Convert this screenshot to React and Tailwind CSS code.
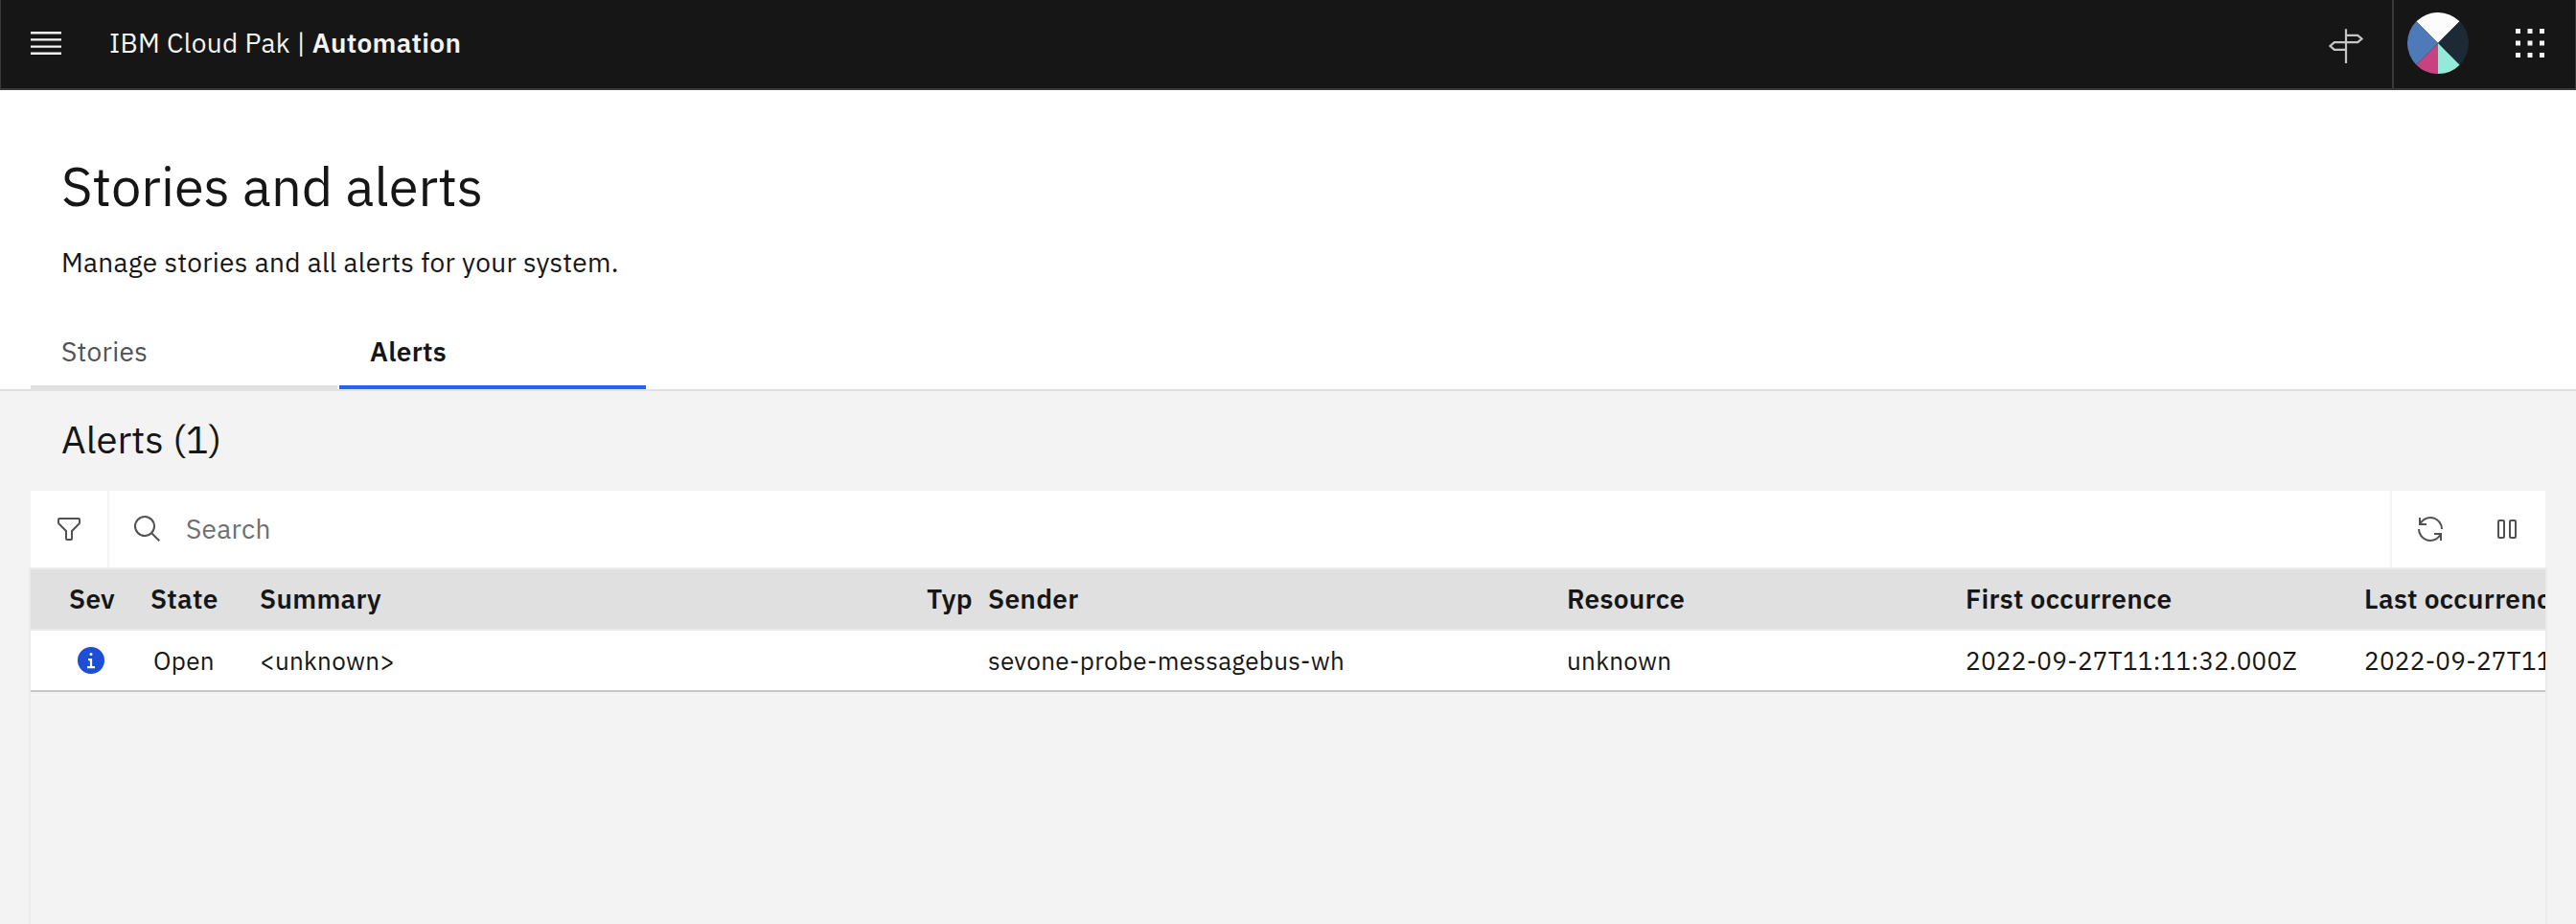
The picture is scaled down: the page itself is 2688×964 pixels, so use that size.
const columns = [
  "Sev",
  "State",
  "Summary",
  "Typ",
  "Sender",
  "Resource",
  "First occurrence",
  "Last occurrence",
];

const gridColumns =
  "grid grid-cols-[85px_114px_696px_64px_604px_416px_416px_400px] items-center pl-10";

function Icon({ children, className = "size-8" }) {
  return (
    <svg viewBox="0 0 32 32" fill="currentColor" className={`shrink-0 ${className}`}>
      {children}
    </svg>
  );
}

function Header() {
  return (
    <header className="flex h-[94px] shrink-0 items-stretch border-x border-b-2 border-[#393939] bg-[#161616] text-[#f4f4f4]">
      <button className="flex w-[94px] justify-start pt-[25px] pl-[27px]">
        <svg viewBox="0 0 20 20" fill="currentColor" className="size-10">
          <path d="M2 14.8h16V16H2zM2 11.2h16v1.2H2zM2 7.6h16v1.2H2zM2 4h16v1.2H2z" />
        </svg>
      </button>
      <div className="flex items-center pb-0.5 pl-[19px] text-[28px] whitespace-pre">
        <span>IBM Cloud Pak | </span>
        <span className="font-semibold">Automation</span>
      </div>
      <div className="ml-auto flex">
        <button className="flex w-[96px] items-start border-r-2 border-[#393939] pt-7 pl-[26px] text-[#c6c6c6]">
          <svg viewBox="0 0 40 40" fill="none" stroke="currentColor" strokeWidth="2.2" className="size-10">
            <path d="M20 2.3V38M20 8.8h12.2l4.3 3.7-4.3 3.7H7.8L3.5 20l4.3 3.8H20" />
          </svg>
        </button>
        <button className="flex w-[92px] items-start justify-center pt-[13px]">
          <svg viewBox="-32 -32 64 64" className="size-16">
            <path fill="#fcfcfc" d="M0 0L-22.63-22.63A32 32 0 0 1 22.63-22.63z" />
            <path fill="#1d2935" d="M0 0L22.63-22.63A32 32 0 0 1 22.63 22.63z" />
            <path fill="#93eadb" d="M0 0L22.63 22.63A32 32 0 0 1 0 32z" />
            <path fill="#c9427f" d="M0 0V32A32 32 0 0 1-22.63 22.63z" />
            <path fill="#4f7ab9" d="M0 0L-22.63 22.63A32 32 0 0 1-22.63-22.63z" />
          </svg>
        </button>
        <button className="flex w-[97px] items-start pt-[25px] pl-[30px]">
          <svg viewBox="0 0 40 40" fill="currentColor" className="size-10">
            <path d="M5 5h5v5H5zM17.5 5h5v5h-5zM30 5h5v5h-5zM5 17.5h5v5H5zM17.5 17.5h5v5h-5zM30 17.5h5v5h-5zM5 30h5v5H5zM17.5 30h5v5h-5zM30 30h5v5h-5z" />
          </svg>
        </button>
      </div>
    </header>
  );
}

function Toolbar() {
  return (
    <div className="mx-8 flex h-20 shrink-0 items-stretch bg-white text-[#525252]">
      <button className="flex w-[82px] items-center border-r-2 border-[#f3f3f3] pl-6">
        <Icon>
          <path d="M18,28H14a2,2,0,0,1-2-2V18.41L4.59,11A2,2,0,0,1,4,9.59V6A2,2,0,0,1,6,4H26a2,2,0,0,1,2,2V9.59A2,2,0,0,1,27.41,11L20,18.41V26A2,2,0,0,1,18,28ZM6,6V9.59l8,8V26h4V17.59l8-8V6Z" />
        </Icon>
      </button>
      <div className="flex flex-1 items-center pl-6">
        <Icon>
          <path d="M29,27.5859l-7.5521-7.5521a11.0177,11.0177,0,1,0-1.4141,1.4141L27.5859,29ZM4,13a9,9,0,1,1,9,9A9.01,9.01,0,0,1,4,13Z" />
        </Icon>
        <span className="pl-6 text-[28px] text-[#6f6f6f]">Search</span>
      </div>
      <div className="flex w-[162px] items-center border-l-2 border-[#f3f3f3]">
        <button className="flex w-20 justify-center">
          <Icon>
            <path d="M12,10H6.78A11,11,0,0,1,27,16h2A13,13,0,0,0,6,7.68V4H4v8h8Z" />
            <path d="M20,22h5.22A11,11,0,0,1,5,16H3a13,13,0,0,0,23,8.32V28h2V20H20Z" />
          </Icon>
        </button>
        <button className="flex w-20 justify-center">
          <Icon>
            <path d="M12,8V24H8V8h4m0-2H8A2,2,0,0,0,6,8V24a2,2,0,0,0,2,2h4a2,2,0,0,0,2-2V8A2,2,0,0,0,12,6Z" />
            <path d="M24,8V24H20V8h4m0-2H20a2,2,0,0,0-2,2V24a2,2,0,0,0,2,2h4a2,2,0,0,0,2-2V8A2,2,0,0,0,24,6Z" />
          </Icon>
        </button>
      </div>
    </div>
  );
}

function AlertsTable() {
  return (
    <div className="mx-[30px] flex-1 overflow-hidden border-x-2 border-t-2 border-[#ebebeb] whitespace-nowrap">
      <div className={`${gridColumns} h-16 border-b-2 border-[#ebebeb] bg-[#e0e0e0] text-[28px] font-semibold`}>
        {columns.map((label) => (
          <div key={label}>{label}</div>
        ))}
      </div>
      <div className={`${gridColumns} h-16 border-b-2 border-[#c6c6c6] bg-white text-[26px]`}>
        <div className="pl-[7px] text-[#1c4fd6]">
          <Icon>
            <path d="M16,2A14,14,0,1,0,30,16,14,14,0,0,0,16,2Zm0,6a1.5,1.5,0,1,1-1.5,1.5A1.5,1.5,0,0,1,16,8Zm4,16.125H12v-2.25h2.875v-5.75H13v-2.25h4.125v8H20Z" />
          </Icon>
        </div>
        <div className="pl-[3px]">Open</div>
        <div>&lt;unknown&gt;</div>
        <div />
        <div>sevone-probe-messagebus-wh</div>
        <div>unknown</div>
        <div>2022-09-27T11:11:32.000Z</div>
        <div>2022-09-27T11:11:32.000Z</div>
      </div>
    </div>
  );
}

export default function App() {
  return (
    <div className="flex h-[964px] flex-col overflow-hidden bg-[#f3f3f3] font-['IBM_Plex_Sans','Roboto','Liberation_Sans',sans-serif] tracking-[0.32px] text-[#161616]">
      <Header />
      <section className="h-[314px] shrink-0 border-b-2 border-[#e0e0e0] bg-white pt-[68px]">
        <h1 className="pl-16 text-[56px] leading-[64px] tracking-normal">Stories and alerts</h1>
        <p className="mt-7 pl-16 text-[28px] leading-10">
          Manage stories and all alerts for your system.
        </p>
        <nav className="mt-10 flex gap-0.5 pl-8 text-[28px]">
          <button className="flex h-[72px] w-80 items-center border-b-4 border-[#e0e0e0] pb-0.5 pl-8 text-[#525252]">
            Stories
          </button>
          <button className="flex h-[72px] w-80 items-center border-b-4 border-[#2563f5] pb-0.5 pl-8 font-semibold">
            Alerts
          </button>
        </nav>
      </section>
      <h2 className="flex h-[104px] shrink-0 items-center pb-1 pl-16 text-[40px] tracking-normal">Alerts (1)</h2>
      <Toolbar />
      <AlertsTable />
    </div>
  );
}
